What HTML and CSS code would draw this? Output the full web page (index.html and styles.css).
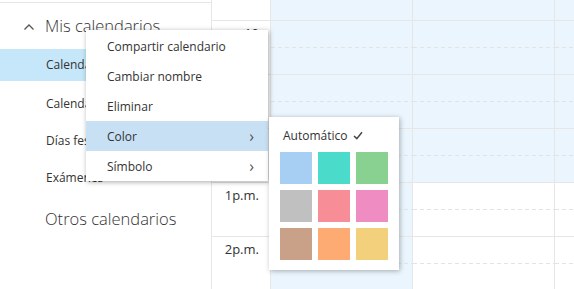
FILE: index.html
```html
<!DOCTYPE html>
<html lang="es">
<head>
    <meta charset="UTF-8">
    <title>Calendario</title>
    <link rel="stylesheet" href="styles.css">
</head>
<body>
    <div id="app">
        <aside class="sidebar">
            <div class="group-title mine">
                <svg class="caret" width="12" height="8" viewBox="0 0 12 8"><path d="M1.5 6.5 L6 2 L10.5 6.5" fill="none" stroke="#555" stroke-width="1.3"/></svg>
                <span>Mis calendarios</span>
            </div>
            <div class="cal-row selected">Calendario</div>
            <div class="cal-row">Calendario de cumpleaños</div>
            <div class="cal-row">Días festivos de España</div>
            <div class="cal-row">Exámenes</div>
            <div class="group-title other">Otros calendarios</div>
        </aside>

        <main class="grid">
            <div class="time-col">
                <div class="slot"></div>
                <div class="slot"><span>10</span></div>
                <div class="slot"><span>11</span></div>
                <div class="slot"><span>12</span></div>
                <div class="slot"><span>1p.m.</span></div>
                <div class="slot"><span>2p.m.</span></div>
            </div>
            <div class="day today">
                <div class="cell"></div>
                <div class="cell"></div>
                <div class="cell"></div>
                <div class="cell"></div>
                <div class="cell"></div>
                <div class="cell"></div>
            </div>
            <div class="day">
                <div class="cell work"></div>
                <div class="cell work"></div>
                <div class="cell work"></div>
                <div class="cell work"></div>
                <div class="cell"></div>
                <div class="cell"></div>
            </div>
            <div class="day">
                <div class="cell work"></div>
                <div class="cell work"></div>
                <div class="cell work"></div>
                <div class="cell work"></div>
                <div class="cell"></div>
                <div class="cell"></div>
            </div>
        </main>

        <!-- context menu -->
        <div class="menu">
            <div class="menu-item">Compartir calendario</div>
            <div class="menu-item">Cambiar nombre</div>
            <div class="menu-item">Eliminar</div>
            <div class="menu-item active">Color <span class="chev">&rsaquo;</span></div>
            <div class="menu-item">Símbolo <span class="chev">&rsaquo;</span></div>
        </div>

        <div class="submenu">
            <div class="auto">Automático
                <svg class="check" width="10" height="9" viewBox="0 0 10 9"><path d="M1 5 L3.8 7.6 L9 1.2" fill="none" stroke="#444" stroke-width="1.5"/></svg>
            </div>
            <div class="swatches">
                <div class="swatch" style="background:#a6cff3"></div>
                <div class="swatch" style="background:#4bdbcb"></div>
                <div class="swatch" style="background:#89d190"></div>
                <div class="swatch" style="background:#c0c0c0"></div>
                <div class="swatch" style="background:#f68d97"></div>
                <div class="swatch" style="background:#ef8cc1"></div>
                <div class="swatch" style="background:#c9a088"></div>
                <div class="swatch" style="background:#fdab72"></div>
                <div class="swatch" style="background:#f3d07c"></div>
            </div>
        </div>
    </div>
</body>
</html>
```

FILE: styles.css
```css
body {
    margin: 0;
    font-family: "Open Sans", "Noto Sans", sans-serif;
    color: #333;
    background: white;
}

#app {
    position: relative;
    display: flex;
    width: 574px;
    height: 289px;
    overflow: hidden;
}

/* sidebar */
.sidebar {
    flex: 0 0 211px;
    border-top: 1px solid #e6e6e6;
    margin-top: 2px;
}

.group-title {
    display: flex;
    align-items: center;
    height: 42px;
    padding-left: 45px;
    box-sizing: border-box;
    font-size: 16.5px;
    font-weight: 300;
    color: #333;
    position: relative;
}

.group-title.mine {
    padding-top: 3px;
}

.group-title .caret {
    position: absolute;
    left: 23px;
    top: 20px;
}

.cal-row {
    height: 32px;
    line-height: 32px;
    padding-left: 46px;
    margin-bottom: 5px;
    font-size: 12px;
    white-space: nowrap;
    overflow: hidden;
}

.cal-row.selected {
    background: #c5e7f9;
    margin-top: 4px;
    margin-bottom: 7px;
}

.group-title.other {
    margin-top: -2px;
}

/* calendar grid */
.grid {
    flex: 1;
    display: flex;
    margin-top: -33px;
    align-self: flex-start;
}

.time-col {
    flex: 0 0 58px;
    border-left: 1px solid #e6e6e6;
}

.slot {
    height: 53px;
    border-bottom: 1px solid #e6e6e6;
    text-align: right;
    padding-right: 11px;
    font-size: 13px;
    line-height: 24px;
}

.day {
    flex: 0 0 141px;
    border-left: 1px solid #e6e6e6;
}

.cell {
    height: 53px;
    border-bottom: 1px solid #e6e6e6;
    background: linear-gradient(to right, #e3e3e3 4px, transparent 4px) 0 26px / 7px 1px repeat-x;
}

.today .cell,
.cell.work {
    background-color: #eaf5fd;
}

/* context menu */
.menu {
    position: absolute;
    left: 86px;
    top: 30px;
    width: 182px;
    padding-top: 1px;
    background: white;
    box-shadow: 1px 1px 5px rgba(0, 0, 0, 0.35);
}

.menu-item {
    display: flex;
    justify-content: space-between;
    align-items: center;
    height: 30px;
    padding: 0 14px 0 21px;
    font-size: 12px;
}

.menu-item.active {
    background: #c7e0f4;
}

.chev {
    font-size: 16px;
    color: #555;
}

.submenu {
    position: absolute;
    left: 269px;
    top: 117px;
    width: 130px;
    height: 153px;
    padding: 0 11px;
    box-sizing: border-box;
    background: white;
    box-shadow: 1px 1px 5px rgba(0, 0, 0, 0.3);
}

.auto {
    display: flex;
    align-items: center;
    gap: 5px;
    height: 35px;
    padding: 2px 0 0 3px;
    box-sizing: border-box;
    font-size: 12px;
}

.swatches {
    display: grid;
    grid-template-columns: repeat(3, 32px);
    grid-auto-rows: 32px;
    gap: 6px;
}
```
